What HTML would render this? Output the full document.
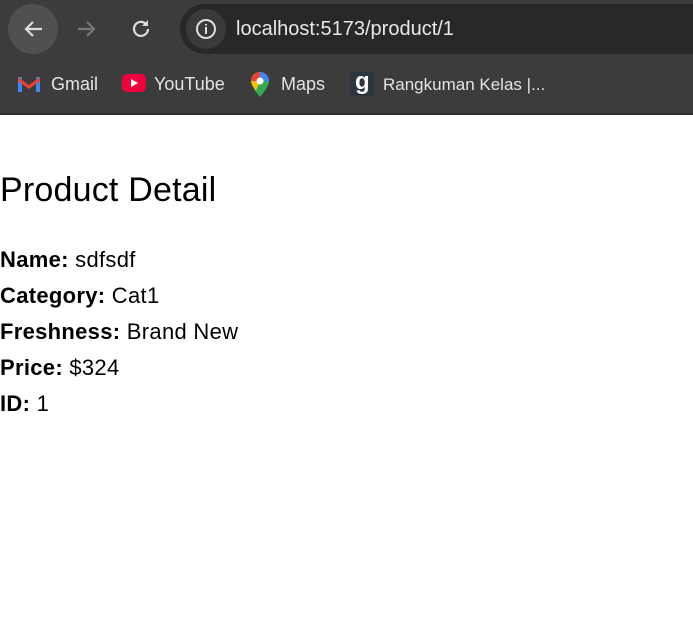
<!DOCTYPE html>
<html><head><style>
body{margin:0;width:693px;height:633px;background:#fff;font-family:"Liberation Sans",sans-serif;overflow:hidden;position:relative}
.chrome{position:absolute;left:0;top:0;width:693px;height:115px;background:#3c3c3c}
.bottom{position:absolute;left:0;top:113px;width:693px;height:2px;background:#2e2e2e}
.back{position:absolute;left:8px;top:4px;width:50px;height:50px;border-radius:50%;background:#505050}
.url{position:absolute;left:180px;top:4px;width:540px;height:50px;border-radius:25px;background:#282828}
.info{position:absolute;left:186px;top:9px;width:40px;height:40px;border-radius:50%;background:#3a3a3a}
.urltext{position:absolute;left:236px;top:18px;font-size:20px;color:#e8e8e8}
.bm{position:absolute;top:74px;font-size:18px;color:#e3e3e3}
.content{position:absolute;left:0;top:170px;color:#000}
h2{margin:0 0 32px;font-size:34px;font-weight:normal;line-height:40px;letter-spacing:0.2px}
p{margin:0;font-size:22px;line-height:36px;letter-spacing:0.3px}
</style></head><body>
<div class="chrome"></div><div class="bottom"></div>
<div class="back"></div>
<svg style="position:absolute;left:22px;top:17px" width="24" height="24" viewBox="0 0 24 24"><path d="M20 12H5M11 5l-7 7 7 7" stroke="#ddd" stroke-width="2.2" fill="none"/></svg>
<svg style="position:absolute;left:74px;top:17px" width="24" height="24" viewBox="0 0 24 24"><path d="M4 12h15M13 5l7 7-7 7" stroke="#777" stroke-width="2.2" fill="none"/></svg>
<svg style="position:absolute;left:129px;top:17px" width="24" height="24" viewBox="0 0 24 24"><path d="M19 12a7 7 0 1 1-2-5" stroke="#ddd" stroke-width="2.2" fill="none"/><path d="M19 3v6h-6" fill="#ddd"/></svg>
<div class="url"></div><div class="info"></div>
<svg style="position:absolute;left:195px;top:18px" width="22" height="22" viewBox="0 0 22 22"><circle cx="11" cy="11" r="9" stroke="#ddd" stroke-width="2" fill="none"/><path d="M11 9v7M11 6v1.5" stroke="#ddd" stroke-width="2"/></svg>
<div class="urltext">localhost:5173/product/1</div>
<svg style="position:absolute;left:18px;top:75px" width="22" height="17" viewBox="0 0 22 17"><path d="M0 2h4v15H0zM18 2h4v15h-4z" fill="#4285f4"/><path d="M0 2l11 8 11-8v4l-11 8L0 6z" fill="#ea4335"/></svg>
<div class="bm" style="left:51px">Gmail</div>
<div style="position:absolute;left:122px;top:74px;width:24px;height:18px;border-radius:5px;background:#f0003c"></div>
<div style="position:absolute;left:131px;top:79px;width:0;height:0;border-left:7px solid #fff;border-top:4px solid transparent;border-bottom:4px solid transparent"></div>
<div class="bm" style="left:154px">YouTube</div>
<svg style="position:absolute;left:251px;top:72px" width="18" height="25" viewBox="0 0 18 25"><path d="M9 0a9 9 0 0 0-9 9c0 6 9 16 9 16s9-10 9-16a9 9 0 0 0-9-9z" fill="#34a853"/><path d="M9 0a9 9 0 0 0-9 9l9 0z" fill="#ea4335"/><path d="M18 9a9 9 0 0 0-9-9v9z" fill="#4285f4"/><path d="M0 9c0 3 3 7 5 10l4-10z" fill="#fbbc04"/><circle cx="9" cy="9" r="3.5" fill="#fff"/></svg>
<div class="bm" style="left:281px">Maps</div>
<div style="position:absolute;left:350px;top:72px;width:24px;height:24px;background:#2a3540"></div>
<div style="position:absolute;left:355px;top:68px;font-size:24px;font-weight:bold;color:#fff">g</div>
<div class="bm" style="left:383px;font-size:17px;top:75px">Rangkuman Kelas |...</div>
<div class="content">
<h2>Product Detail</h2>
<p><b>Name:</b> sdfsdf</p>
<p><b>Category:</b> Cat1</p>
<p><b>Freshness:</b> Brand New</p>
<p><b>Price:</b> $324</p>
<p><b>ID:</b> 1</p>
</div>
</body></html>
